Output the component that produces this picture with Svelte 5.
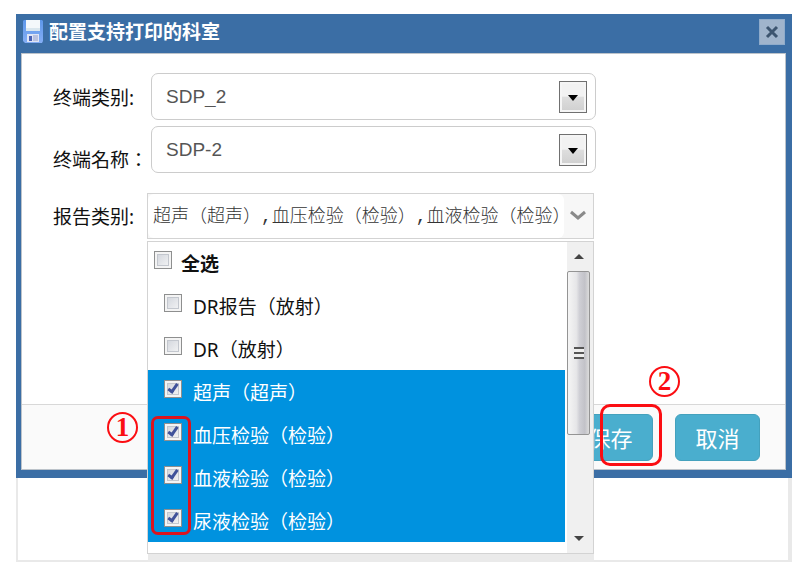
<script>
  const terminalTypes = ["SDP_2"];
  const terminalNames = ["SDP-2"];

  let terminalType = $state("SDP_2");
  let terminalName = $state("SDP-2");
  let listOpen = $state(true);

  let reports = $state([
    { id: "dr-report", name: "DR报告（放射）", checked: false },
    { id: "dr", name: "DR（放射）", checked: false },
    { id: "ultrasound", name: "超声（超声）", checked: true },
    { id: "pressure", name: "血压检验（检验）", checked: true },
    { id: "blood", name: "血液检验（检验）", checked: true },
    { id: "urine", name: "尿液检验（检验）", checked: true },
  ]);

  let allChecked = $derived(reports.every((r) => r.checked));
  let summary = $derived(reports.filter((r) => r.checked).map((r) => r.name).join(","));

  const toggleAll = (e) => {
    const value = e.currentTarget.checked;
    reports.forEach((r) => (r.checked = value));
  };
</script>

<main class="page">
  <section class="dialog" role="dialog" aria-labelledby="dialog-title">
    <header class="title-bar">
      <svg class="disk" viewBox="0 0 20 23" aria-hidden="true">
        <defs>
          <linearGradient id="disk-fill" x1="0" y1="0" x2="0" y2="1">
            <stop offset="0" stop-color="#5d97ea" />
            <stop offset="1" stop-color="#84aef5" />
          </linearGradient>
        </defs>
        <path d="M1 0h18l1 1v20l-1 2H2l-2-2V1z" fill="url(#disk-fill)" />
        <path d="M3 0h14v11H3z" fill="#f4f8fb" />
        <path d="M3 8h14v3H3z" fill="#d9e6ee" />
        <path d="M4 14h12v8H4z" fill="#dfe5f5" />
        <path d="M6 16h3v5H6z" fill="#4a62b5" />
        <path d="M10 15h5v6h-5z" fill="#b9c2e0" />
      </svg>
      <h1 id="dialog-title">配置支持打印的科室</h1>
      <button class="close" type="button" aria-label="关闭">
        <svg viewBox="0 0 14 14" aria-hidden="true">
          <path d="M2 2l10 10M12 2L2 12" stroke="#3d5570" stroke-width="3" />
        </svg>
      </button>
    </header>

    <div class="content">
      <form class="fields">
        <div class="row">
          <label for="terminal-type">终端类别:</label>
          <div class="select">
            <select id="terminal-type" bind:value={terminalType}>
              {#each terminalTypes as item}
                <option value={item}>{item}</option>
              {/each}
            </select>
            <span class="drop" aria-hidden="true"></span>
          </div>
        </div>

        <div class="row">
          <label class="low" for="terminal-name">终端名称：</label>
          <div class="select">
            <select id="terminal-name" bind:value={terminalName}>
              {#each terminalNames as item}
                <option value={item}>{item}</option>
              {/each}
            </select>
            <span class="drop" aria-hidden="true"></span>
          </div>
        </div>

        <div class="row report">
          <label for="report-type">报告类别:</label>
          <div class="combo">
            <input id="report-type" type="text" readonly value={summary} />
            <button type="button" class="toggle" aria-label="展开" onclick={() => (listOpen = !listOpen)}>
              <svg viewBox="0 0 18 11" aria-hidden="true">
                <path d="M2 2l7 6 7-6" fill="none" stroke="#8a8a8a" stroke-width="3" />
              </svg>
            </button>

            {#if listOpen}
              <div class="panel">
                <div class="options">
                  <label class="option all">
                    <input type="checkbox" checked={allChecked} onchange={toggleAll} />
                    <span>全选</span>
                  </label>
                  {#each reports as report (report.id)}
                    <label class="option" class:selected={report.checked}>
                      <input type="checkbox" bind:checked={report.checked} />
                      <span>{report.name}</span>
                    </label>
                  {/each}
                </div>
                <div class="scrollbar" aria-hidden="true">
                  <span class="arrow up"></span>
                  <span class="thumb"><i></i></span>
                  <span class="arrow down"></span>
                </div>
                <span class="frame checks"></span>
                <span class="step one">1</span>
              </div>
            {/if}
          </div>
        </div>
      </form>

      <footer class="actions">
        <div class="save">
          <button class="action" type="button">保存</button>
          <span class="frame"></span>
          <span class="step two">2</span>
        </div>
        <button class="action" type="button">取消</button>
      </footer>
    </div>
  </section>
  <div class="behind"></div>
</main>

<style>
  :global(body) {
    margin: 0;
    background: #fff;
  }
  * {
    box-sizing: border-box;
  }
  .page {
    padding: 14px 13px 0 16px;
    font-family: "Noto Sans", "Noto Sans CJK SC", sans-serif;
    font-size: 19px;
    line-height: 26px;
    color: #111;
  }
  .dialog {
    padding: 0 6px 8px 5px;
    background: #3b6ea5;
  }
  .title-bar {
    display: flex;
    align-items: center;
    height: 39px;
    padding: 0 1px 4px 2px;
  }
  .disk {
    width: 20px;
    height: 23px;
    margin-right: 6px;
  }
  h1 {
    flex: 1;
    margin: 0;
    font-size: 19px;
    line-height: 26px;
    color: #fff;
  }
  .close {
    display: flex;
    align-items: center;
    justify-content: center;
    width: 26px;
    height: 26px;
    padding: 0;
    border: 1px solid #8fabca;
    background: #a0b4cc;
  }
  .close svg {
    width: 14px;
    height: 14px;
  }
  .content {
    border: 1px solid #bcc3ca;
    background: #fff;
  }
  .fields {
    padding: 19px 20px 165px 31px;
  }
  .row {
    display: flex;
    align-items: center;
    margin-bottom: 6px;
  }
  .row > label {
    flex: none;
    width: 98px;
    padding-top: 2px;
    white-space: nowrap;
  }
  .row > .low {
    padding-top: 20px;
    font-family: "Noto Sans", "Noto Sans CJK TC", sans-serif;
  }
  .select {
    position: relative;
    flex: 0 1 445px;
  }
  select {
    display: block;
    width: 100%;
    height: 47px;
    padding: 0 44px 0 14px;
    border: 1px solid #ccc;
    border-radius: 7px;
    background: #fff;
    appearance: none;
    font: 19px "Liberation Sans", sans-serif;
    color: #555;
  }
  .drop {
    position: absolute;
    top: 8px;
    right: 9px;
    width: 28px;
    height: 32px;
    border: 1px solid #707070;
    box-shadow: inset 0 0 0 2px #f5f5f5;
    background: linear-gradient(#f2f2f2 48%, #dedede 49%, #cfcfcf);
    pointer-events: none;
  }
  .drop::after {
    content: "";
    position: absolute;
    top: 13px;
    left: 8px;
    border: 5px solid transparent;
    border-top: 6px solid #000;
    border-bottom: 0;
  }
  .report {
    margin: 20px 0 0;
  }
  .report > label {
    width: 94px;
  }
  .combo {
    position: relative;
    display: flex;
    flex: 0 1 447px;
    height: 46px;
    border: 1px solid #d3d3d3;
    background: #f7f7f7;
  }
  .combo > input {
    flex: 1;
    min-width: 0;
    padding: 0 0 4px;
    border: 0;
    border-left: 5px solid #fff;
    border-radius: 6px;
    background: #fff;
    font: 300 18px "Liberation Mono", "Noto Sans CJK SC", monospace;
    color: #333;
  }
  .toggle {
    display: flex;
    align-items: center;
    justify-content: center;
    width: 29px;
    padding: 0 2px 2px 0;
    border: 0;
    background: none;
  }
  .toggle svg {
    width: 18px;
    height: 11px;
  }
  .panel {
    position: absolute;
    z-index: 2;
    top: 47px;
    left: -1px;
    right: -1px;
    display: flex;
    border: 1px solid #d3d3d3;
    background: #fff;
  }
  .panel::after {
    content: "";
    position: absolute;
    top: 100%;
    left: 0;
    right: -1px;
    height: 9px;
    border-top: 1px solid #d3d3d3;
    background: #eaeaea;
  }
  .options {
    flex: 1;
    padding-bottom: 11px;
  }
  .option {
    display: flex;
    align-items: center;
    gap: 11px;
    height: 43px;
    padding: 2px 0 0 16px;
    white-space: nowrap;
  }
  .all {
    gap: 9px;
    height: 42px;
    padding-left: 6px;
    font-weight: bold;
  }
  .selected {
    background: #0092df;
    color: #fff;
  }
  .option input {
    appearance: none;
    width: 18px;
    height: 18px;
    margin: 0 0 8px;
    border: 1px solid #8e8f8f;
    box-shadow: inset 0 0 0 2px #f4f4f4, inset 0 0 0 3px #c3c7ce;
    background: linear-gradient(135deg, #cdd1d9, #f8f8f8);
  }
  .option input:checked::after {
    content: "";
    display: block;
    width: 3px;
    height: 8px;
    margin: 1px 0 0 5px;
    border: solid #40529a;
    border-width: 0 3px 3px 0;
    transform: rotate(35deg);
  }
  .scrollbar {
    display: flex;
    flex-direction: column;
    width: 26px;
    padding-right: 3px;
    margin-left: 2px;
    background: #f0f0f0;
  }
  .arrow {
    display: flex;
    align-items: center;
    justify-content: center;
    height: 29px;
  }
  .arrow::after {
    content: "";
    border: 5px solid transparent;
  }
  .up::after {
    border-top: 0;
    border-bottom-color: #444;
  }
  .down {
    margin-top: auto;
  }
  .down::after {
    border-bottom: 0;
    border-top-color: #444;
  }
  .thumb {
    display: flex;
    align-items: center;
    justify-content: center;
    height: 164px;
    border: 1px solid #949494;
    border-radius: 2px;
    background: linear-gradient(90deg, #f5f5f5, #e6e6e8 40%, #cfcfd5 55%, #c2c2c8 80%, #dcdcdc);
  }
  .thumb i {
    width: 10px;
    height: 12px;
    background: repeating-linear-gradient(#555 0 2px, #eee 2px 5px);
  }
  .frame {
    position: absolute;
    border: 3px solid #fb0d12;
    border-radius: 10px;
    pointer-events: none;
  }
  .checks {
    top: 174px;
    left: 3px;
    width: 40px;
    height: 119px;
    border-color: #dc141e;
    border-radius: 7px;
  }
  .step {
    position: absolute;
    width: 31px;
    height: 31px;
    border: 2px solid #fb0d12;
    border-radius: 50%;
    font: bold 27px/27px "Liberation Serif", serif;
    text-align: center;
    color: #fb0d12;
  }
  .one {
    top: 170px;
    left: -41px;
  }
  .two {
    top: -48px;
    right: -27px;
  }
  .actions {
    display: flex;
    justify-content: flex-end;
    gap: 22px;
    padding: 9px 25px 8px;
    border-top: 1px solid #d8d8d8;
    background: #fafafa;
  }
  .save {
    position: relative;
  }
  .save .frame {
    top: -10px;
    right: -9px;
    width: 62px;
    height: 62px;
  }
  .action {
    display: block;
    width: 85px;
    height: 47px;
    padding: 0 0 2px;
    border: 1px solid #44a1bd;
    border-radius: 6px;
    background: #4aaece;
    font: 22px "Noto Sans CJK SC", sans-serif;
    color: #fff;
  }
  .behind {
    height: 84px;
    border: 2px solid #e9e9e9;
    border-top: 0;
    border-right-width: 4px;
  }
</style>
